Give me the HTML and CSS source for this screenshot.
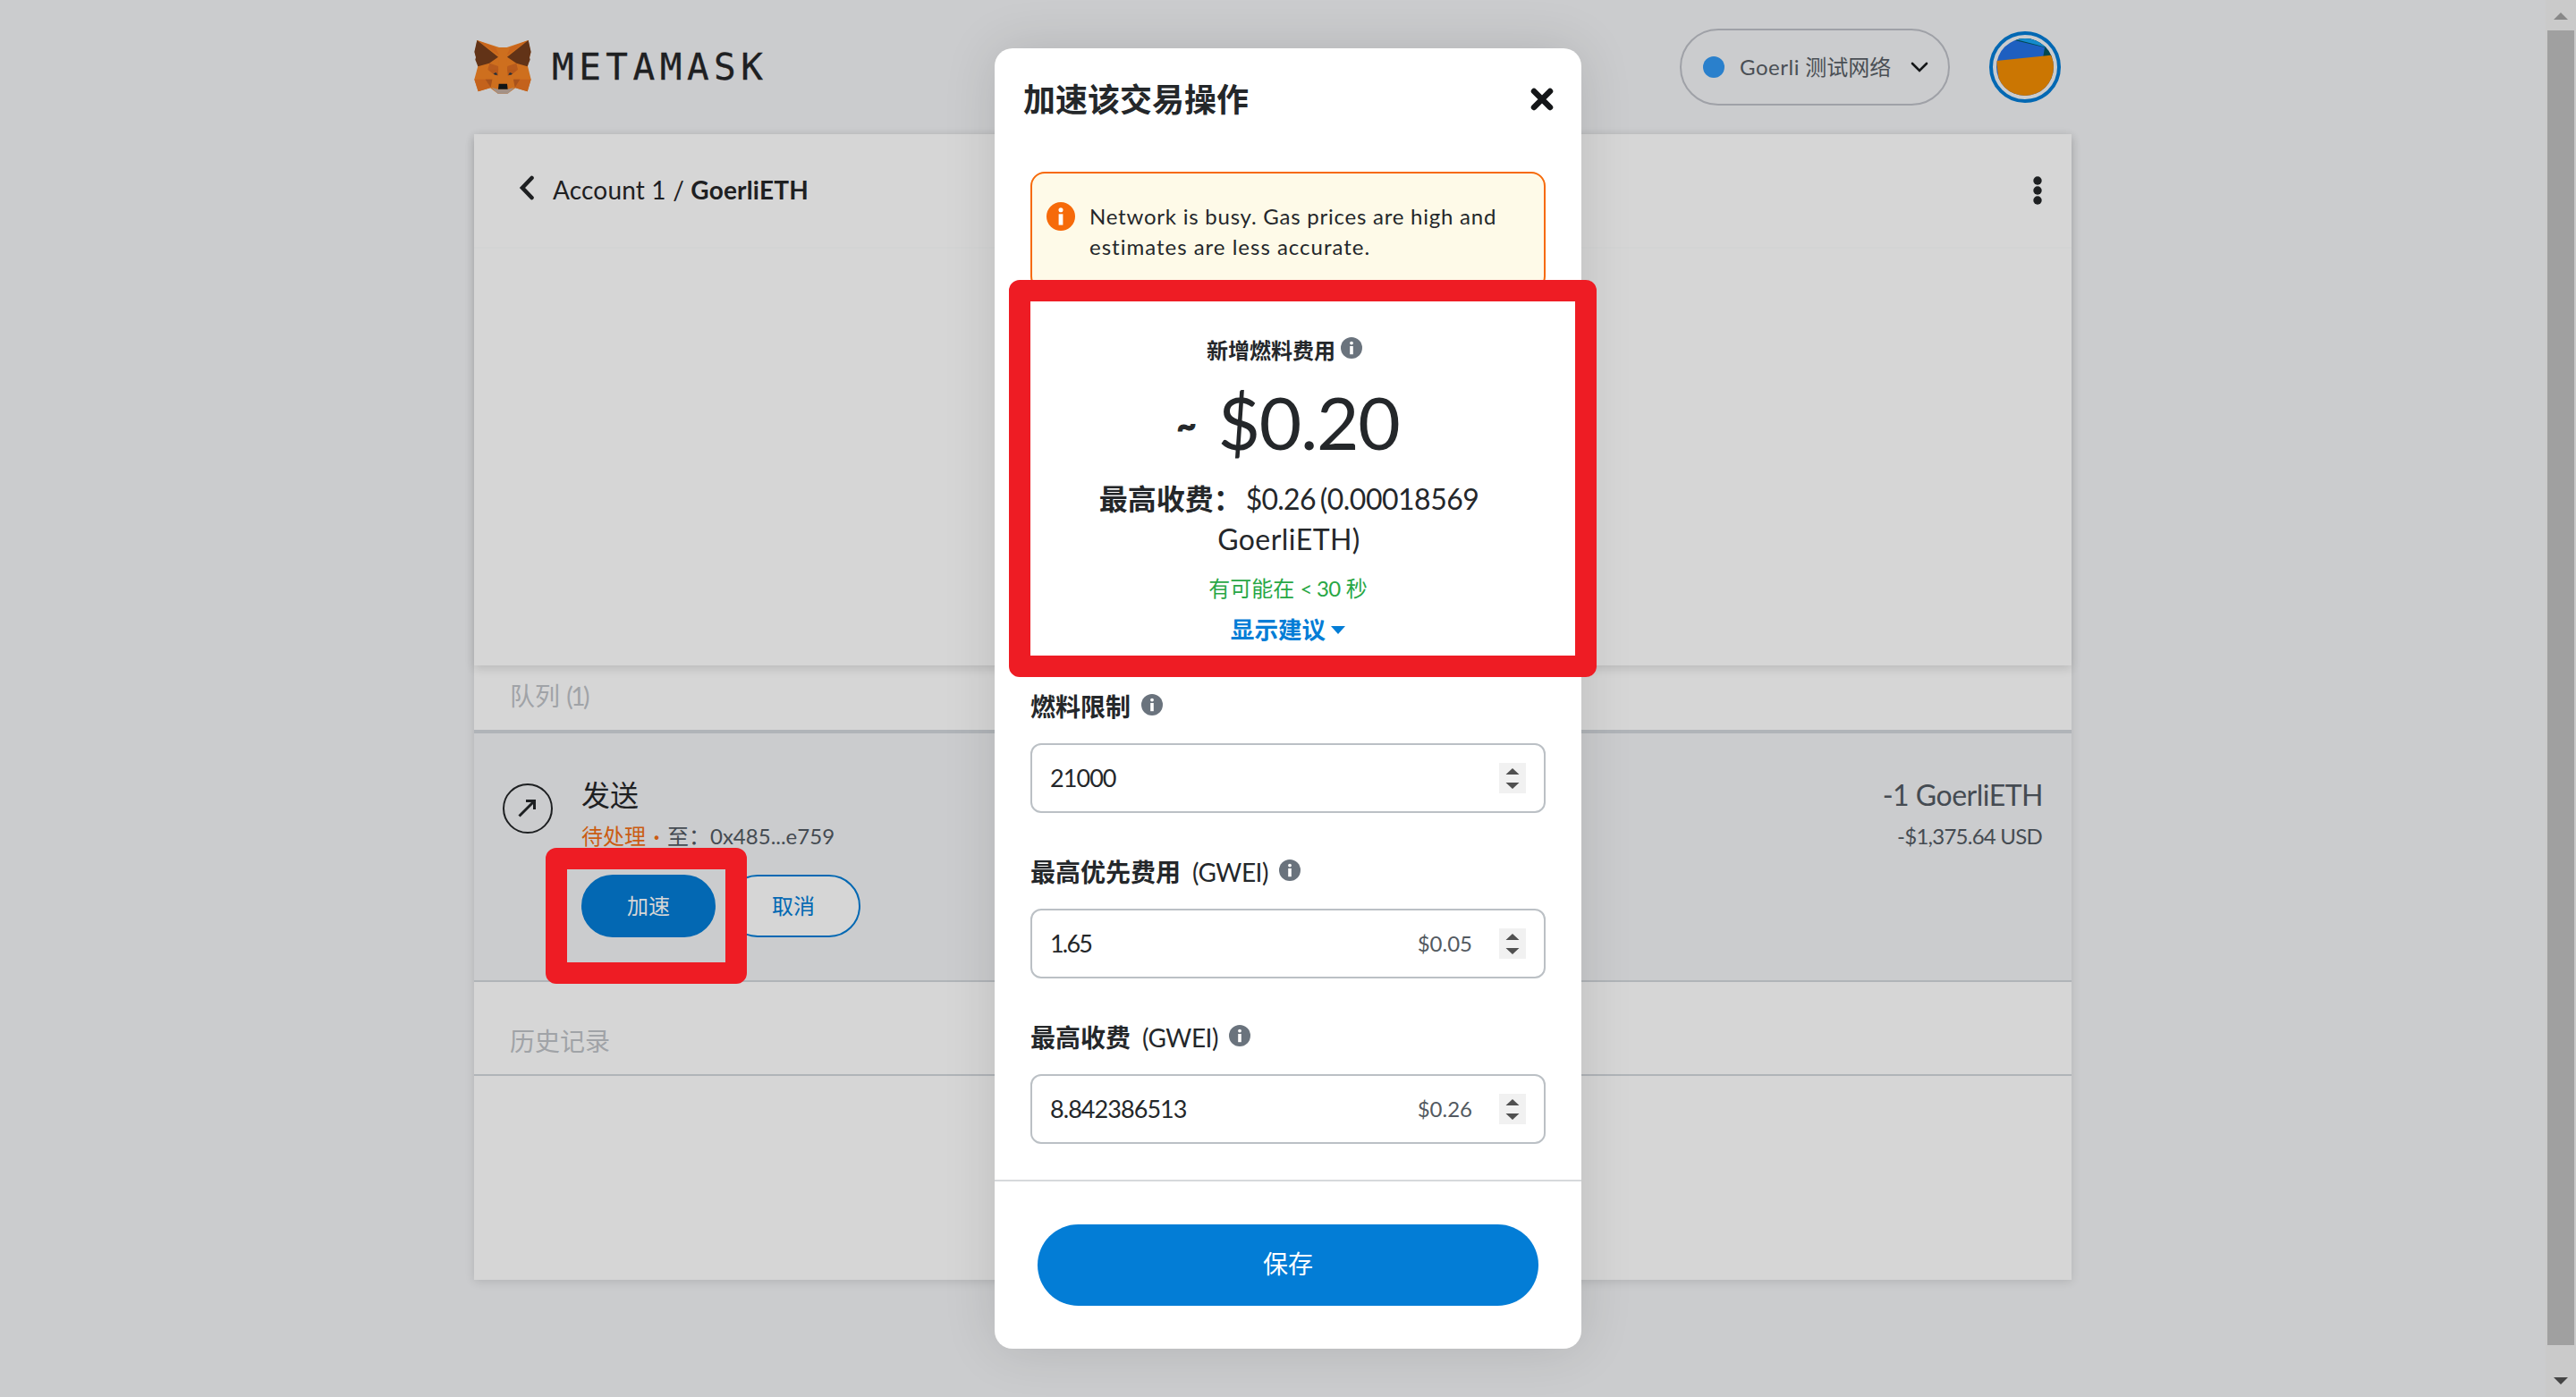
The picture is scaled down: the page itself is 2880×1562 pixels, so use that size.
FILE: index.html
```html
<!DOCTYPE html>
<html lang="zh-CN">
<head>
<meta charset="utf-8">
<title>MetaMask</title>
<link rel="stylesheet" href="styles.css">
</head>
<body>
<svg class="sprite" aria-hidden="true">
  <symbol id="info" viewBox="0 0 24 24">
    <circle cx="12" cy="12" r="12" fill="currentColor"/>
    <circle cx="12" cy="6.6" r="1.9" fill="#fff"/>
    <rect x="10.2" y="10" width="3.6" height="9.2" fill="#fff"/>
  </symbol>
  <symbol id="spin" viewBox="0 0 30 34">
    <rect width="30" height="34" fill="#f1f1f1"/>
    <path d="M15 6l7.5 7h-15zM15 29l7.5-7h-15z" fill="#505050"/>
  </symbol>
</svg>

<div class="page">
  <header class="app-header">
    <svg class="fox" viewBox="24 21 192 180">
      <path fill="#ce6f1e" d="M34 21L108 45H134L206 21L214 62L204 108L215 152L203 193L163 181L136 200H104L78 181L38 193L25 152L37 108L27 62Z"/>
      <path fill="#c9651c" d="M34 21L96 45L108 72ZM206 21L145 45L134 72Z"/>
      <path fill="#623317" d="M34 21L105 77L75 98L37 109L33 98L28 86L30 78L25 60ZM206 21L135 77L166 98L203 109L207 98L212 86L210 78L215 60Z"/>
      <path fill="#c4621c" d="M25 152H85L78 181L38 193ZM215 152H156L163 181L203 193Z"/>
      <path fill="#a8521c" d="M62 152H85L80 179ZM178 152H156L161 179Z"/>
      <path fill="#b85b1d" d="M76 98L70 119L107 121L105 108ZM166 98L171 119L134 121L136 108Z"/>
      <path fill="#b5581b" d="M70 119H106L104 141L88 134ZM171 119H135L137 141L153 134Z"/>
      <path fill="#ce6f1e" d="M108 84H133L138 168H103Z"/>
      <path fill="#24313d" d="M89 133L98 129L103 137L94 137ZM153 133L144 129L139 137L148 137Z"/>
      <path fill="#a39186" d="M82 180L105 185H136L159 180L137 200H104Z"/>
      <path fill="#111416" d="M107 167H135L137 185H105Z"/>
    </svg>
    <span class="wordmark">METAMASK</span>
    <div class="network">
      <span class="network-dot"></span>
      <span class="network-name"><span class="network-id">Goerli</span> 测试网络</span>
      <svg class="chevron" viewBox="0 0 20 12"><path d="M2 2l8 8 8-8" fill="none" stroke="#141618" stroke-width="2.6" stroke-linecap="round"/></svg>
    </div>
    <svg class="avatar" viewBox="0 0 80 80">
      <defs><clipPath id="ava"><circle cx="40" cy="40" r="32"/></clipPath></defs>
      <circle cx="40" cy="40" r="38" fill="none" stroke="#0368b3" stroke-width="4"/>
      <g clip-path="url(#ava)">
        <rect width="80" height="80" fill="#1e5fc0"/>
        <path d="M20 8L62 18L60 30H80V0H20z" fill="#03484f"/>
        <path d="M26 8L64 18V0H26z" fill="#148bcd"/>
        <path d="M8 33L80 25.500V80H14z" fill="#cb7602"/>
      </g>
    </svg>
  </header>

  <main class="panel">
    <section class="asset">
      <div class="asset-bar">
        <svg class="back" viewBox="0 0 18 28"><path d="M14.500 3L4 14l10.500 11" fill="none" stroke="#1e2022" stroke-width="4.600" stroke-linecap="round"/></svg>
        <div class="crumb">Account 1 / <b>GoerliETH</b></div>
        <svg class="dots" viewBox="0 0 10 32"><g fill="#1e2022"><circle cx="5" cy="5" r="4.700"/><circle cx="5" cy="16" r="4.700"/><circle cx="5" cy="27" r="4.700"/></g></svg>
      </div>
    </section>
    <h2 class="section-title">队列 <span class="count">(1)</span></h2>
    <article class="tx">
      <svg class="tx-icon" viewBox="0 0 56 56">
        <circle cx="28" cy="28" r="27" fill="none" stroke="#1e2022" stroke-width="2"/>
        <path d="M18.500 36.500L34.500 20.500M26 19.500H35.500V29" fill="none" stroke="#1e2022" stroke-width="3"/>
      </svg>
      <div class="tx-main">
        <div class="tx-title">发送</div>
        <div class="tx-sub"><span class="pending">待处理</span><span class="sep">·</span><span>至：</span><span>0x485...e759</span></div>
        <div class="tx-actions"><button class="pill primary">加速</button><button class="pill">取消</button></div>
      </div>
      <div class="tx-amount">
        <div class="amount">-1 GoerliETH</div>
        <div class="fiat">-$1,375.64 USD</div>
      </div>
    </article>
    <h2 class="section-title history">历史记录</h2>
  </main>
</div>

<div class="scrollbar">
  <svg class="arrow" viewBox="0 0 16 8"><path d="M8 0l8 8H0z" fill="#888"/></svg>
  <div class="thumb"></div>
  <svg class="arrow" viewBox="0 0 16 8"><path d="M8 8l8-8H0z" fill="#444"/></svg>
</div>

<div class="modal">
  <div class="modal-head">
    <h1>加速该交易操作</h1>
    <svg class="close" viewBox="0 0 26 26"><path d="M4 4l18 18M22 4L4 22" stroke="#141618" stroke-width="6.500" stroke-linecap="round"/></svg>
  </div>
  <div class="modal-body">
    <div class="alert">
      <svg class="alert-icon" viewBox="0 0 24 24"><use href="#info"/></svg>
      <p><span class="alert-lead">Network is busy. Gas prices are high and</span><br><span class="alert-rest">estimates are less accurate.</span></p>
    </div>
    <div class="fee-label">新增燃料费用<svg class="info"><use href="#info"/></svg></div>
    <div class="fee"><span class="tilde">~</span><span>$0.20</span></div>
    <div class="max"><b>最高收费：</b><span class="max-usd">$0.26</span><span class="max-eth">(0.00018569</span><br><span class="max-unit">GoerliETH)</span></div>
    <div class="eta">有可能在 <span class="eta-time">&lt; 30</span> 秒</div>
    <div class="suggest">显示建议<svg class="caret" viewBox="0 0 16 9"><path d="M0 0h16L8 9z" fill="#037dd6"/></svg></div>

    <label class="field-label"><b>燃料限制</b><svg class="info"><use href="#info"/></svg></label>
    <div class="field"><span class="value">21000</span><svg class="spin"><use href="#spin"/></svg></div>

    <label class="field-label"><b>最高优先费用</b><span class="unit">(GWEI)</span><svg class="info"><use href="#info"/></svg></label>
    <div class="field"><span class="value tight">1.65</span><span class="usd">$0.05</span><svg class="spin"><use href="#spin"/></svg></div>

    <label class="field-label"><b>最高收费</b><span class="unit">(GWEI)</span><svg class="info"><use href="#info"/></svg></label>
    <div class="field"><span class="value">8.842386513</span><span class="usd">$0.26</span><svg class="spin"><use href="#spin"/></svg></div>
  </div>
  <div class="modal-foot"><button class="save">保存</button></div>
</div>

<div class="mark mark-fee"></div>
<div class="mark mark-speed"></div>
</body>
</html>
```
FILE: styles.css
```css
* { box-sizing: border-box; }

body {
  margin: 0;
  width: 2880px;
  height: 1562px;
  overflow: hidden;
  position: relative;
  background: #cbccce;
  color: #1e2022;
  font-family: Lato, "Noto Sans CJK SC", sans-serif;
  font-size: 24px;
}

h1, h2, p { margin: 0; font-weight: 400; }
button { font: inherit; border: 0; padding: 0; }
svg { display: block; flex: none; }
.sprite { position: absolute; width: 0; height: 0; }

.page { width: 1786px; margin-left: 530px; }

/* header */
.app-header { display: flex; align-items: center; height: 150px; padding-right: 12px; }
.fox { width: 64px; height: 60px; }
.wordmark {
  flex: 1;
  margin-left: 23px;
  font: 41px/60px "DejaVu Sans Mono", monospace;
  letter-spacing: 5.500px;
  -webkit-text-stroke: .3px currentColor;
}
.network {
  display: flex;
  align-items: center;
  width: 302px;
  height: 86px;
  padding-left: 24px;
  border: 2px solid #9fa1a7;
  border-radius: 43px;
}
.network-dot { width: 24px; height: 24px; border-radius: 50%; background: #2a80cc; }
.network-name { margin-left: 17px; color: #4a4f55; line-height: 34px; white-space: nowrap; }
.network-id { letter-spacing: .550px; }
.chevron { width: 20px; height: 12px; margin-left: 22px; }
.avatar { width: 80px; height: 80px; margin-left: 44px; }

/* account panel */
.panel { height: 1281px; background: #d6d6d6; box-shadow: 0 2px 10px rgba(0, 0, 0, .12); }
.asset { height: 594px; box-shadow: 0 4px 10px rgba(0, 0, 0, .12); }
.asset-bar {
  display: flex;
  align-items: center;
  height: 128px;
  padding: 0 33px 0 50px;
  border-bottom: 2px solid #d3d4d4;
}
.back { width: 18px; height: 28px; margin-top: -6px; }
.crumb { flex: 1; margin: -3px 0 0 20px; font-size: 28px; line-height: 40px; letter-spacing: .180px; white-space: nowrap; }
.dots { width: 10px; height: 32px; }

.section-title {
  height: 76px;
  padding: 14px 0 0 40px;
  border-bottom: 4px solid #b0b4b8;
  color: #a0a3a7;
  font-size: 28px;
  line-height: 40px;
}
.section-title.history { height: 105px; padding-top: 46px; border-bottom-width: 2px; }
.count { letter-spacing: -2.500px; }

.tx {
  display: flex;
  height: 278px;
  padding: 48px 33px 0 32px;
  border-bottom: 2px solid #b0b4b8;
  background: #cbccce;
}
.tx-icon { width: 56px; height: 56px; margin-top: 8px; }
.tx-main { flex: 1; margin-left: 32px; }
.tx-title { font-size: 32px; line-height: 44px; margin-top: -1px; }
.tx-sub { display: flex; margin-top: 6px; line-height: 36px; color: #454b52; }
.pending { color: #ca5c12; }
.sep { width: 24px; text-align: center; color: #ca5c12; font-weight: 700; }
.tx-actions { display: flex; gap: 12px; margin-top: 25px; }
.pill {
  width: 150px;
  height: 70px;
  padding-bottom: 4px;
  border: 2px solid #0368b3;
  border-radius: 35px;
  background: #d6d6d6;
  color: #0368b3;
}
.pill.primary { background: #0368b3; color: #d6d6d6; }
.tx-amount { text-align: right; color: #454b52; }
.amount { margin: -1px -1px 0 0; font-size: 32px; line-height: 44px; letter-spacing: -.500px; }
.fiat { margin-top: 6px; line-height: 36px; letter-spacing: -.760px; }

/* scrollbar */
.scrollbar {
  position: absolute;
  top: 0;
  right: 0;
  width: 34px;
  height: 1562px;
  padding: 14px 2px;
  background: #cacaca;
  display: flex;
  flex-direction: column;
  align-items: center;
  justify-content: space-between;
}
.arrow { width: 16px; height: 8px; }
.thumb { width: 30px; height: 1470px; margin-bottom: 24px; background: #a0a0a0; }

/* speed-up dialog */
.modal {
  position: absolute;
  left: 1112px;
  top: 54px;
  width: 656px;
  height: 1454px;
  border-radius: 20px;
  background: #fff;
  color: #24272a;
  box-shadow: 0 0 60px rgba(0, 0, 0, .12);
}
.modal-head { display: flex; justify-content: space-between; height: 138px; padding: 33px 31px 0 32px; }
.modal-head h1 { font-size: 36px; line-height: 48px; font-weight: 700; }
.close { width: 26px; height: 26px; margin-top: 11px; }
.modal-body { padding: 0 40px 40px; }

.alert {
  display: flex;
  height: 133px;
  padding: 31px 16px 0;
  border: 2px solid #f66a0a;
  border-radius: 16px;
  background: #fefae8;
}
.alert-icon { width: 32px; height: 32px; margin-top: 1px; color: #f66a0a; }
.alert p { margin-left: 16px; line-height: 34px; white-space: nowrap; }
.alert-lead { letter-spacing: .770px; }
.alert-rest { letter-spacing: 1px; }

.info { width: 24px; height: 24px; color: #6a737d; }
.fee-label { display: flex; justify-content: center; align-items: center; gap: 6px; margin-top: 50px; padding-right: 8px; line-height: 34px; font-weight: 700; }
.fee-label .info { margin-top: -6px; }
.fee { display: flex; justify-content: center; height: 100px; margin-top: 12px; font-size: 82px; line-height: 100px; letter-spacing: -1.300px; }
.tilde { width: 46px; margin-top: 3px; font-size: 38px; font-weight: 900; -webkit-text-stroke: 1px currentColor; }
.max { margin-top: 14px; padding-left: 2px; text-align: center; font-size: 32px; line-height: 45px; white-space: nowrap; }
.max-usd { margin-left: 4px; letter-spacing: -.760px; }
.max-eth { margin-left: 5px; letter-spacing: -.500px; }
.max-unit { letter-spacing: .450px; }
.eta { margin-top: 16px; text-align: center; line-height: 34px; color: #28a745; white-space: nowrap; }
.eta-time { letter-spacing: -.700px; }
.suggest { display: flex; justify-content: center; align-items: center; gap: 6px; margin-top: 9px; font-size: 26.600px; line-height: 40px; font-weight: 700; color: #037dd6; }
.caret { width: 16px; height: 9px; }

.field-label { display: flex; align-items: center; height: 40px; margin-top: 46px; font-size: 28px; line-height: 40px; }
.field-label b { margin-top: -1px; }
.field-label .info { margin: -4px 0 0 12px; }
.unit { margin: -1px 0 0 13px; letter-spacing: -.450px; }
.field {
  display: flex;
  align-items: center;
  height: 78px;
  margin-top: 21px;
  padding: 0 20px;
  border: 2px solid #bbc0c5;
  border-radius: 12px;
}
.value { flex: 1; font-size: 27px; line-height: 40px; letter-spacing: -.950px; }
.value.tight { letter-spacing: -1.800px; }
.usd { margin-right: 30px; color: #535a61; line-height: 34px; }
.spin { width: 30px; height: 34px; }

.modal-foot { padding: 48px; border-top: 2px solid #d6d9dc; }
.save { display: block; width: 560px; height: 91px; padding-bottom: 5px; border-radius: 46px; background: #037dd6; color: #fff; font-size: 28px; }

/* highlight frames drawn over the screen */
.mark { position: absolute; border: 24px solid #ee1c24; border-radius: 12px; }
.mark-fee { left: 1128px; top: 313px; width: 657px; height: 444px; }
.mark-speed { left: 610px; top: 948px; width: 225px; height: 152px; }
```
